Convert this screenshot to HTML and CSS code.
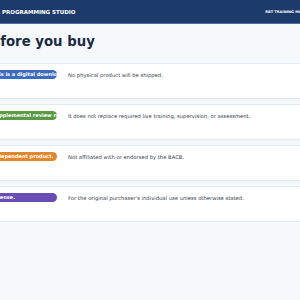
FILE: index.html
```html
<!DOCTYPE html>
<html lang="en">
<head>
  <meta charset="UTF-8">
  <title>Before you buy</title>
  <meta name="viewport" content="width=device-width, initial-scale=1">
  <link rel="stylesheet" href="styles.css">
</head>
<body>
  <header class="topbar">
    <div class="brand">ABA PROGRAMMING STUDIO</div>
    <div class="tag">RBT TRAINING MATERIALS</div>
  </header>

  <main class="wrap">
    <h1>Before you buy</h1>

    <div class="notes">
      <div class="note">
        <span class="pill blue">This is a digital download.</span>
        <p>No physical product will be shipped.</p>
      </div>
      <div class="note">
        <span class="pill green">Supplemental review resource.</span>
        <p>It does not replace required live training, supervision, or assessment.</p>
      </div>
      <div class="note">
        <span class="pill orange">Independent product.</span>
        <p>Not affiliated with or endorsed by the BACB.</p>
      </div>
      <div class="note">
        <span class="pill purple">License.</span>
        <p>For the original purchaser's individual use unless otherwise stated.</p>
      </div>
    </div>
  </main>
</body>
</html>
```

FILE: styles.css
```css
:root {
  --navy: #1d3a6c;
  --ink: #1c2b44;
  --text: #333b4a;
  --bg: #f5f9fc;
  --line: #e3e9f1;
}

body {
  margin: 0;
  background: var(--bg);
  font-family: "DejaVu Sans", Verdana, sans-serif;
  overflow: hidden;
}

.topbar {
  display: flex;
  align-items: center;
  height: 23px;
  background: var(--navy);
  border-bottom: 1px solid #4a6da3;
  color: #fff;
  white-space: nowrap;
}

.brand {
  margin-left: -12.6px;
  font-size: 5.5px;
  font-weight: bold;
}

.tag {
  margin-left: auto;
  margin-right: -18px;
  font-size: 3.6px;
  font-weight: bold;
}

.wrap {
  margin: 0 -20px;
}

h1 {
  margin: 10px 0 12.6px;
  padding-left: 1px;
  font-size: 13.3px;
  line-height: 16px;
  color: var(--ink);
}

.notes {
  display: flex;
  flex-direction: column;
  gap: 5px;
}

.note {
  display: flex;
  align-items: flex-start;
  gap: 11px;
  padding: 6px 0 18px 7px;
  background: #fff;
  border: 1px solid var(--line);
  box-shadow: 0 1px 2px rgba(28, 43, 68, 0.04);
}

.pill {
  flex: none;
  width: 69px;
  box-sizing: border-box;
  padding: 0 4px;
  border-radius: 5px;
  overflow: hidden;
  white-space: nowrap;
  color: #fff;
  font-size: 5px;
  font-weight: bold;
  line-height: 9px;
}

.blue { background: #3b6cc0; }
.green { background: #5a9a45; }
.orange { background: #e2852b; }
.purple { background: #6a4cb5; }

.note p {
  margin: 0;
  font-size: 5.25px;
  line-height: 10px;
  color: var(--text);
}
```
